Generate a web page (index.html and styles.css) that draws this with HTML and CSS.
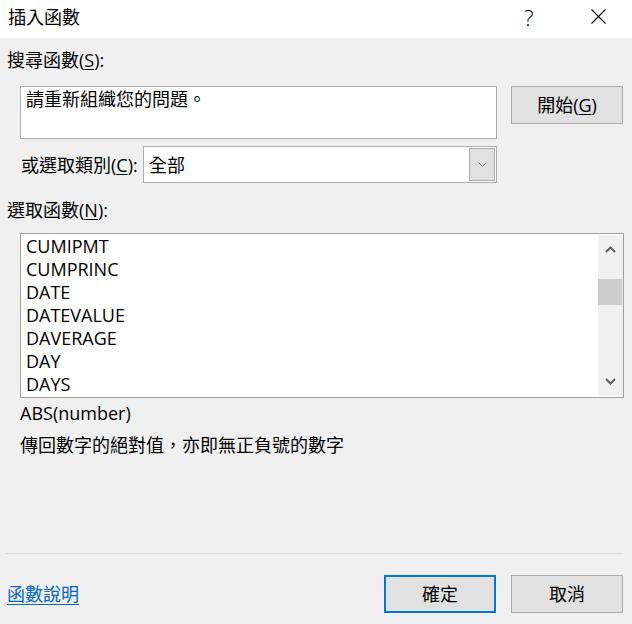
FILE: index.html
```html
<!DOCTYPE html>
<html>
<head>
<title>插入函數</title>
<link rel="stylesheet" href="styles.css">
</head>
<body>

<div class="titlebar">
    <div class="title">插入函數</div>
    <div class="help">?</div>
    <div class="close">
        <svg width="15" height="15" viewBox="0 0 15 15"><path d="M0.5 0.5L14.5 14.5M14.5 0.5L0.5 14.5" stroke="#000" stroke-width="1.1" fill="none"/></svg>
    </div>
</div>

<div class="dialog">
    <div class="label">搜尋函數(<u>S</u>):</div>

    <div class="search-row">
        <div class="textbox">請重新組織您的問題。</div>
        <div class="btn go">開始(<u>G</u>)</div>
    </div>

    <div class="category-row">
        <div class="cat-label">或選取類別(<u>C</u>):</div>
        <div class="combo">
            <span class="combo-text">全部</span>
            <span class="combo-btn">
                <svg width="9" height="5" viewBox="0 0 9 5"><path d="M0.5 0.5L4.5 4.5L8.5 0.5" stroke="#707070" stroke-width="1" fill="none"/></svg>
            </span>
        </div>
    </div>

    <div class="label list-label">選取函數(<u>N</u>):</div>

    <div class="listbox">
        <div class="items">
            <div class="item">CUMIPMT</div>
            <div class="item">CUMPRINC</div>
            <div class="item">DATE</div>
            <div class="item">DATEVALUE</div>
            <div class="item">DAVERAGE</div>
            <div class="item">DAY</div>
            <div class="item">DAYS</div>
        </div>
        <div class="scrollbar">
            <div class="arrow">
                <svg width="11" height="7" viewBox="0 0 11 7"><path d="M1 6L5.5 1.5L10 6" stroke="#606060" stroke-width="2" fill="none"/></svg>
            </div>
            <div class="track">
                <div class="thumb"></div>
            </div>
            <div class="arrow">
                <svg width="11" height="7" viewBox="0 0 11 7"><path d="M1 1L5.5 5.5L10 1" stroke="#606060" stroke-width="2" fill="none"/></svg>
            </div>
        </div>
    </div>

    <div class="syntax">ABS(number)</div>
    <div class="desc">傳回數字的絕對值，亦即無正負號的數字</div>

    <div class="separator"></div>

    <div class="footer">
        <a class="help-link" href="#">函數說明</a>
        <div class="btn ok">確定</div>
        <div class="btn cancel">取消</div>
    </div>
</div>

</body>
</html>
```

FILE: styles.css
```css
body {
    margin: 0;
    background: #f0f0f0;
    color: #000;
    font-family: "Open Sans", "Noto Sans CJK TC", sans-serif;
    font-size: 18px;
    line-height: 24px;
    width: 632px;
    height: 624px;
    overflow: hidden;
}

u {
    text-decoration-thickness: 1px;
    text-underline-offset: 2px;
}

.titlebar {
    display: flex;
    align-items: center;
    height: 38px;
    background: #fff;
    padding-right: 11px;
}

.title {
    flex: 1;
    padding-left: 8px;
    margin-top: -4px;
}

.help {
    width: 46px;
    text-align: center;
    margin-top: -4px;
    font-size: 22px;
    font-weight: 300;
}

.close {
    width: 46px;
    margin-left: 23px;
    display: flex;
    justify-content: center;
    margin-top: -6px;
}

.label {
    padding-left: 7px;
    margin-top: 10px;
}

.search-row {
    display: flex;
    margin-top: 14px;
}

.textbox {
    margin-left: 20px;
    width: 465px;
    height: 51px;
    padding: 0 5px;
    background: #fff;
    border: 1px solid #adadad;
}

.btn {
    box-sizing: border-box;
    width: 112px;
    height: 38px;
    background: #e1e1e1;
    border: 1px solid #adadad;
    display: flex;
    align-items: center;
    justify-content: center;
}

.go {
    margin-left: 14px;
}

.category-row {
    display: flex;
    align-items: center;
    width: 497px;
    margin-top: 7px;
}

.cat-label {
    padding-left: 21px;
}

.combo {
    box-sizing: border-box;
    margin-left: auto;
    width: 354px;
    height: 37px;
    background: #fff;
    border: 1px solid #adadad;
    display: flex;
    align-items: center;
    padding: 1px;
}

.combo-text {
    flex: 1;
    padding-left: 4px;
}

.combo-btn {
    box-sizing: border-box;
    width: 26px;
    height: 33px;
    background: #e1e1e1;
    border: 1px solid #adadad;
    display: flex;
    align-items: center;
    justify-content: center;
}

.list-label {
    margin-top: 15px;
}

.listbox {
    display: flex;
    margin: 11px 0 0 20px;
    width: 602px;
    height: 163px;
    background: #fff;
    border: 1px solid #a0a0a0;
}

.items {
    flex: 1;
    padding: 1px 0 0 5px;
}

.item {
    line-height: 23px;
}

.scrollbar {
    width: 25px;
    margin: 1px 0;
    background: #f0f0f0;
    display: flex;
    flex-direction: column;
}

.arrow {
    height: 29px;
    display: flex;
    align-items: center;
    justify-content: center;
}

.track {
    flex: 1;
    padding-top: 15px;
}

.thumb {
    height: 26px;
    margin-right: 1px;
    background: #cdcdcd;
}

.syntax {
    padding-left: 20px;
    margin-top: 3px;
}

.desc {
    padding-left: 20px;
    margin-top: 8px;
}

.separator {
    margin: 96px 0 0 6px;
    width: 617px;
    height: 1px;
    background: #dadada;
}

.footer {
    display: flex;
    align-items: center;
    margin-top: 21px;
    padding-right: 9px;
}

.help-link {
    flex: 1;
    padding-left: 7px;
    color: #0066cc;
    text-decoration-thickness: 1px;
    text-underline-offset: 3px;
}

.ok {
    border: 2px solid #0078d7;
}

.cancel {
    margin-left: 15px;
}
```
